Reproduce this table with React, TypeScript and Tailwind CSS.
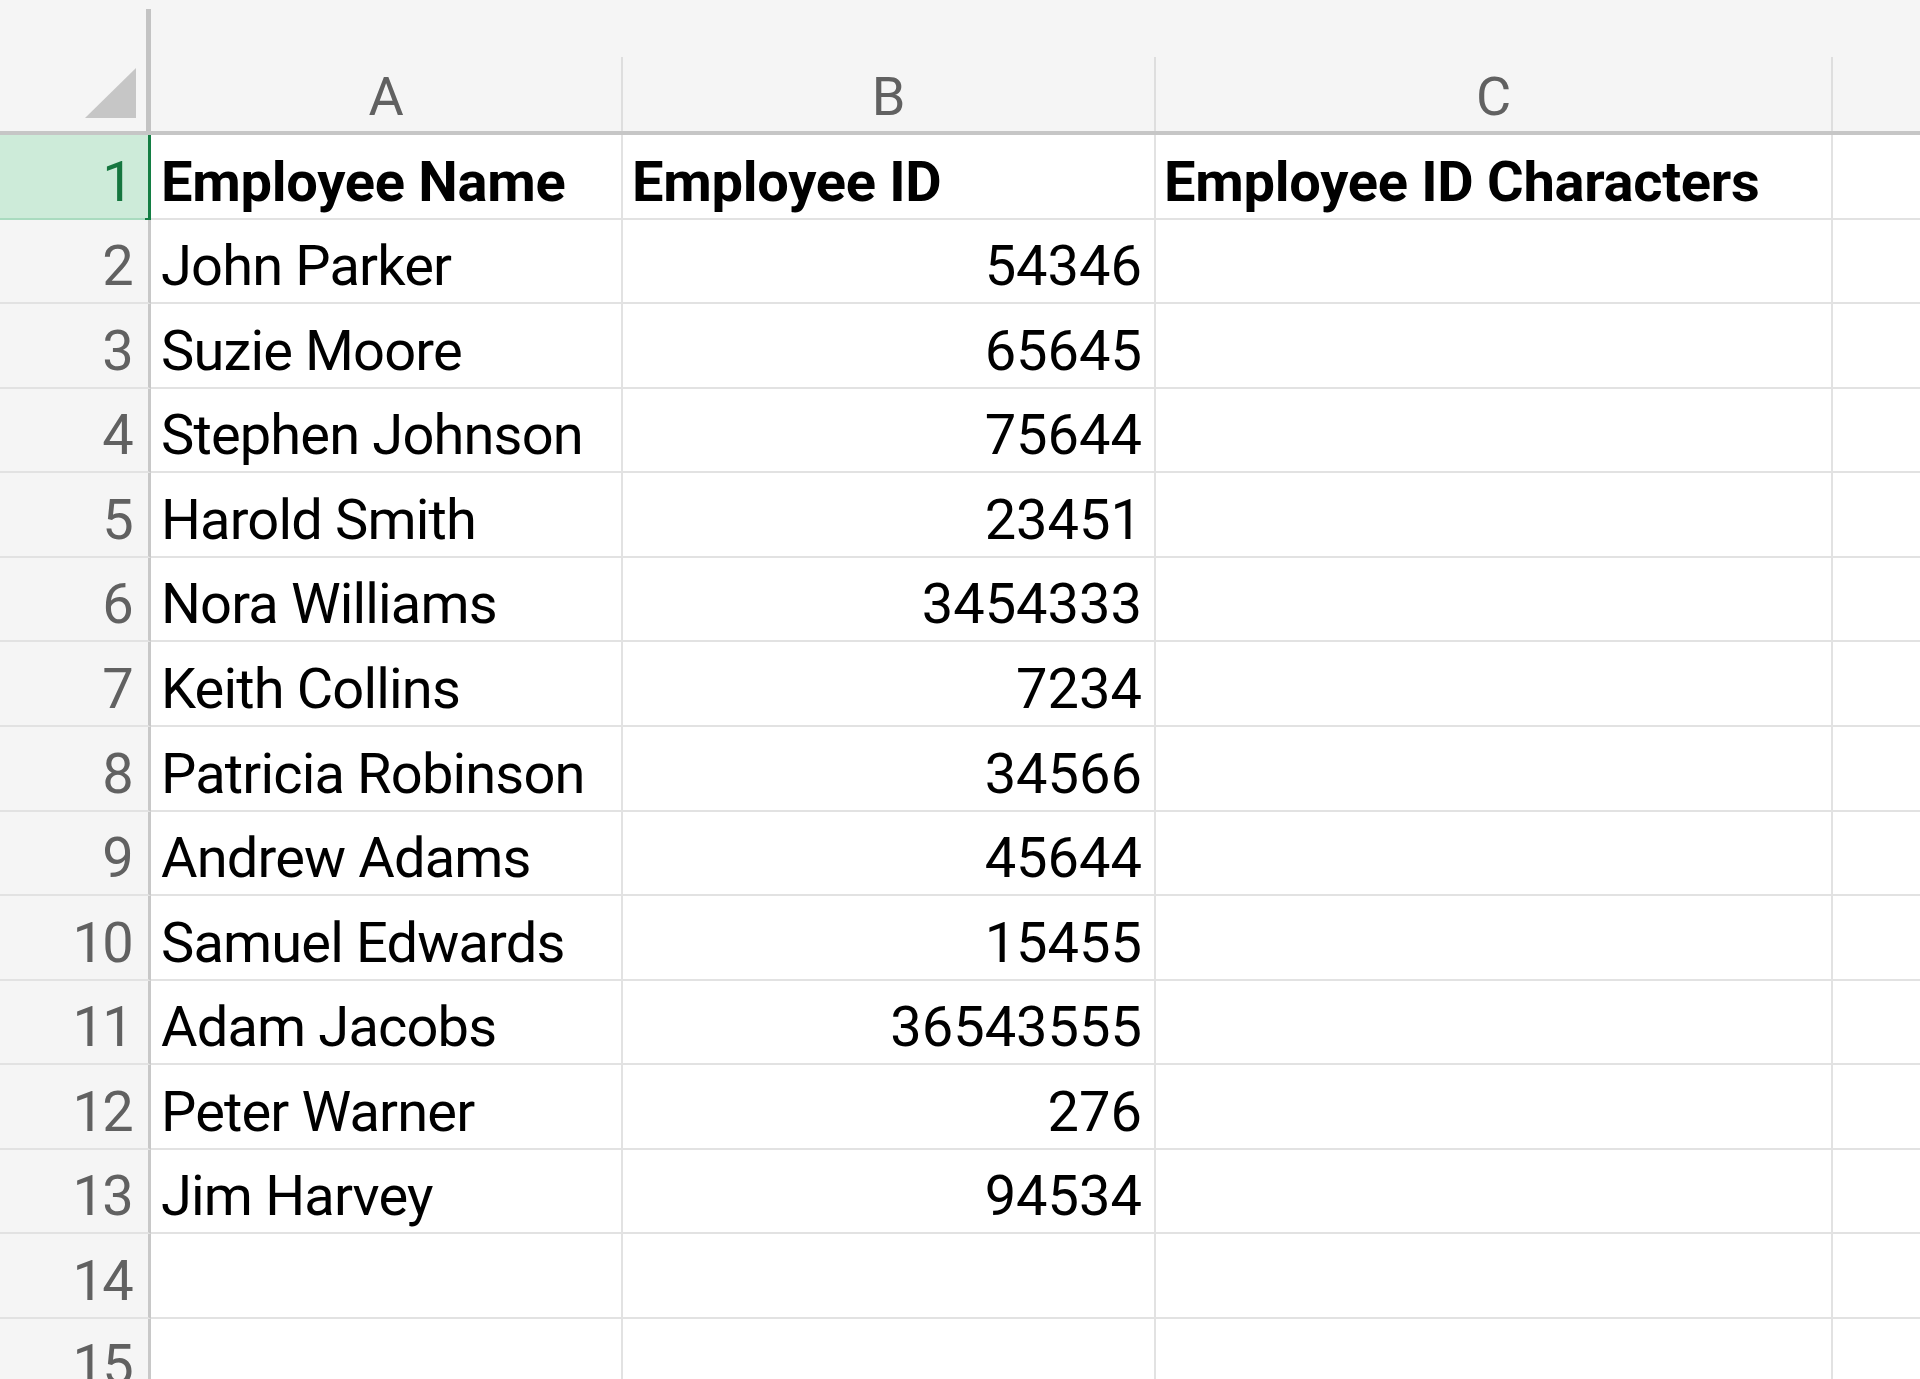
import React from 'react';

const rows: { name: string; id: string }[] = [
  { name: 'John Parker', id: '54346' },
  { name: 'Suzie Moore', id: '65645' },
  { name: 'Stephen Johnson', id: '75644' },
  { name: 'Harold Smith', id: '23451' },
  { name: 'Nora Williams', id: '3454333' },
  { name: 'Keith Collins', id: '7234' },
  { name: 'Patricia Robinson', id: '34566' },
  { name: 'Andrew Adams', id: '45644' },
  { name: 'Samuel Edwards', id: '15455' },
  { name: 'Adam Jacobs', id: '36543555' },
  { name: 'Peter Warner', id: '276' },
  { name: 'Jim Harvey', id: '94534' },
  { name: '', id: '' },
  { name: '', id: '' },
];

function RowHeader({ n, active }: { n: number; active?: boolean }) {
  return (
    <div
      className={`relative w-[151px] shrink-0 flex items-end justify-end pr-[16px] pb-[8px] border-r-[3px] tracking-[-0.03em] ${
        active
          ? 'bg-[#cdebd9] text-[#15763f] border-r-[#137e43] border-b-2 border-b-[#a9dbbf]'
          : 'bg-[#f5f5f5] text-[#616161] border-r-[#c8c8c8] border-b-2 border-b-[#e2e2e2]'
      }`}
    >
      {n}
      {/* selection marker runs a little past the row */}
      {active && <div className="absolute right-[-3px] bottom-[-7px] w-[6px] h-[7px] bg-[#137e43]" />}
    </div>
  );
}

function Row({ n, name, id, bold }: { n: number; name: string; id: string; bold?: boolean }) {
  return (
    <div className="flex h-[84.57px] leading-none">
      <RowHeader n={n} active={n === 1} />
      <div
        className={`w-[472px] shrink-0 flex items-end pl-[10px] pb-[8px] border-r-2 border-b-2 border-[#e2e2e2] text-black whitespace-nowrap ${
          bold ? 'font-bold tracking-[-0.005em]' : 'tracking-[-0.015em]'
        }`}
      >
        {name}
      </div>
      <div
        className={`w-[533px] shrink-0 flex items-end pb-[8px] border-r-2 border-b-2 border-[#e2e2e2] text-black whitespace-nowrap ${
          bold ? 'font-bold tracking-[-0.005em] justify-start pl-[9px]' : 'justify-end pr-[12px]'
        }`}
      >
        {id}
      </div>
      <div className="w-[677px] shrink-0 flex items-end pl-[8px] pb-[8px] border-r-2 border-b-2 border-[#e2e2e2] text-black font-bold tracking-[-0.005em] whitespace-nowrap">
        {bold ? 'Employee ID Characters' : ''}
      </div>
      <div className="flex-1 border-b-2 border-[#e2e2e2]" />
    </div>
  );
}

export default function App() {
  return (
    <div className="w-[1920px] h-[1379px] overflow-hidden bg-white font-['Roboto',sans-serif] text-[56px]">
      {/* column letters */}
      <div className="flex items-end h-[135px] bg-[#f5f5f5] border-b-4 border-[#c6c6c6] leading-none text-[#616161] text-[54px]">
        <div className="w-[151px] h-[122px] shrink-0 flex items-end justify-end pr-[10px] pb-[13px] border-r-[5px] border-[#c3c3c3]">
          <svg width="51" height="50" viewBox="0 0 51 50">
            <polygon points="51,0 51,50 0,50" fill="#c6c6c6" />
          </svg>
        </div>
        <div className="w-[472px] h-[74px] shrink-0 flex items-end justify-center pb-[7px] border-r-2 border-[#dedede]">A</div>
        <div className="w-[533px] h-[74px] shrink-0 flex items-end justify-center pb-[7px] border-r-2 border-[#dedede]">B</div>
        <div className="w-[677px] h-[74px] shrink-0 flex items-end justify-center pb-[7px] border-r-2 border-[#dedede]">C</div>
        <div className="flex-1" />
      </div>

      <Row n={1} name="Employee Name" id="Employee ID" bold />
      {rows.map((r, i) => (
        <Row key={i} n={i + 2} name={r.name} id={r.id} />
      ))}
    </div>
  );
}
